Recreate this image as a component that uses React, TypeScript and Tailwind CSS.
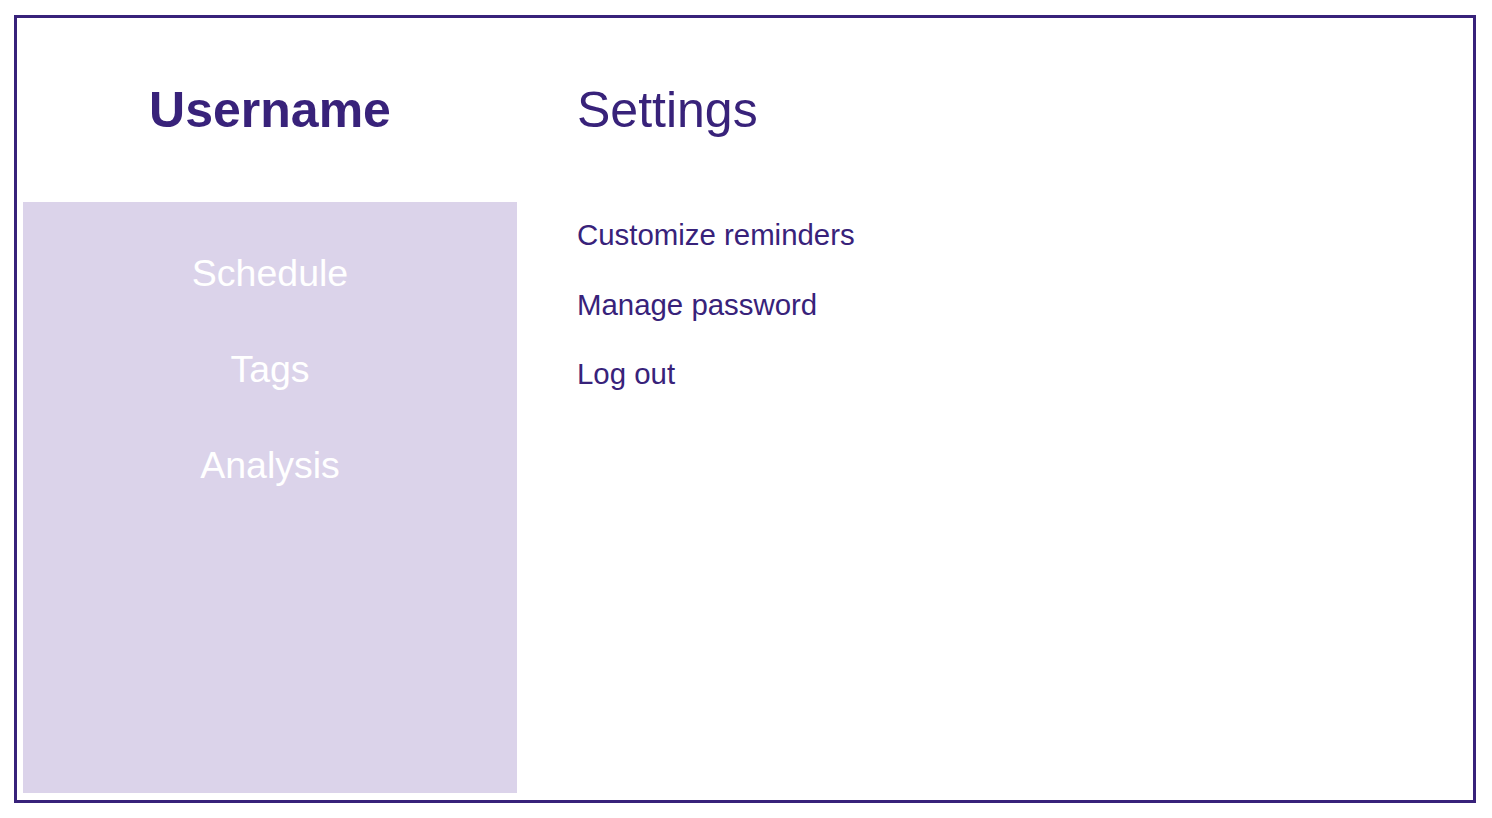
export default function App() {
  const nav = ["Schedule", "Tags", "Analysis"];
  const settings = ["Customize reminders", "Manage password", "Log out"];

  return (
    <div
      className="h-screen w-full bg-white pt-[15px] pb-[15px] pl-[14px] pr-[16px]"
      style={{ fontFamily: '"Liberation Sans", Arial, sans-serif' }}
    >
      <div className="grid h-full grid-cols-[494px_1fr] grid-rows-[184px_1fr] border-[3px] border-[#38227a] px-[6px] pb-[7px]">
        <div className="flex items-center justify-center">
          <h1 className="text-[50px] font-bold leading-none text-[#38227a]">Username</h1>
        </div>
        <div className="flex items-center pl-[60px]">
          <h2 className="text-[50px] leading-none text-[#38227a]">Settings</h2>
        </div>

        <nav className="flex flex-col items-center gap-[56px] bg-[#dbd3ea] pt-[51px]">
          {nav.map((item) => (
            <a key={item} className="text-[37.5px] leading-[40px] text-white">
              {item}
            </a>
          ))}
        </nav>

        <ul className="flex flex-col gap-[36.5px] pl-[60px] pt-[16px]">
          {settings.map((item) => (
            <li key={item} className="text-[29.4px] leading-[33px] text-[#38227a]">
              {item}
            </li>
          ))}
        </ul>
      </div>
    </div>
  );
}
